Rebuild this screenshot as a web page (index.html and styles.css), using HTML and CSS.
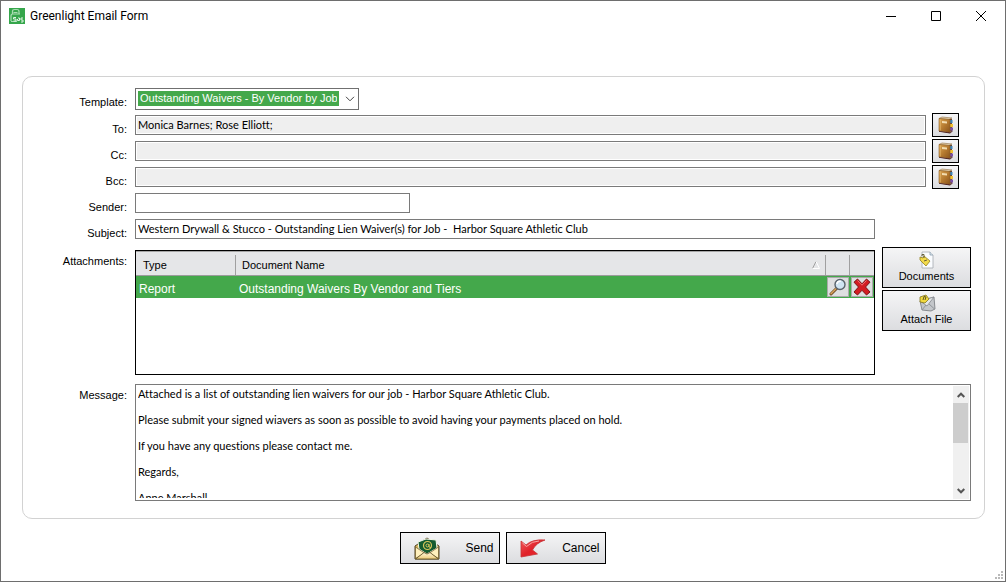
FILE: index.html
```html
<!DOCTYPE html>
<html lang="en">
<head>
<meta charset="utf-8">
<title>Greenlight Email Form</title>
<link rel="stylesheet" href="styles.css">
</head>
<body>
<svg class="defs" aria-hidden="true">
  <defs>
    <linearGradient id="leather" x1="0" y1="0" x2="1" y2="1">
      <stop offset="0" stop-color="#dda957"/><stop offset=".5" stop-color="#b67b30"/><stop offset="1" stop-color="#88531c"/>
    </linearGradient>
    <linearGradient id="red" x1="0" y1="0" x2="1" y2="1">
      <stop offset="0" stop-color="#f25a5c"/><stop offset=".5" stop-color="#e0222a"/><stop offset="1" stop-color="#f0262c"/>
    </linearGradient>
    <linearGradient id="paper" x1="0" y1="0" x2="0" y2="1">
      <stop offset="0" stop-color="#fff8df"/><stop offset="1" stop-color="#eccb78"/>
    </linearGradient>
    <symbol id="book" viewBox="0 0 16 18">
      <path d="M11 2.500l3 .5v12L10 17z" fill="#6b4630"/>
      <path d="M12 4h2.500v3H12z" fill="#3b83b8"/>
      <path d="M12 8h3v3H12z" fill="#f2c230"/>
      <path d="M12 11.500h3v3H12z" fill="#7a4fa8"/>
      <path d="M1 2.500L4 1l10 1-3 1.500z" fill="#e9d7b4" stroke="#7a5223" stroke-width=".5"/>
      <path d="M1 2.500l11 1v13L1 15z" fill="url(#leather)" stroke="#8a5a22" stroke-width=".6"/>
      <path d="M4 5l5 .5v2L4 7z" fill="#f3ddb0"/>
      <path d="M2.200 3.500v11" stroke="#e9bd72" stroke-width=".8"/>
      <path d="M1 15l11 1.500 2.500-2v1L12 17.500 1 15.800z" fill="#4b1d1d"/>
    </symbol>
  </defs>
</svg>
<div class="window">
  <header class="titlebar">
    <svg class="app-icon" viewBox="0 0 16 16" aria-hidden="true">
      <rect width="16" height="16" fill="#35a64b"/>
      <path d="M3.500 6V3.500Q3.500 1.500 5.500 1.500H8Q10 1.500 10 3.500V6" fill="none" stroke="#a9dcb2" stroke-width="1.200"/>
      <path d="M2 13V8Q2 6 4 6h7M2 13.500h6M4.500 4.500h4" fill="none" stroke="#a9dcb2" stroke-width="1.200"/>
      <path d="M7 9.500H4.500v1.500H7V13H4.500M9 10h1.500v2.500H8.500V11M14 10h-2v2h2v2h-2" fill="none" stroke="#dff4e2" stroke-width="1"/>
    </svg>
    <h1 class="title">Greenlight Email Form</h1>
    <div class="window-buttons">
      <button class="window-button" aria-label="Minimize"><svg viewBox="0 0 10 10"><path d="M0 5.500h10"/></svg></button>
      <button class="window-button" aria-label="Maximize"><svg viewBox="0 0 10 10"><path d="M.5.5h9v9h-9z"/></svg></button>
      <button class="window-button" aria-label="Close"><svg viewBox="0 0 10 10"><path d="M0 0l10 10M10 0L0 10"/></svg></button>
    </div>
  </header>

  <main class="panel">
    <div class="row row-template">
      <label class="label" for="template">Template:</label>
      <div class="combo">
        <select id="template" class="combo-select"><option>Outstanding Waivers - By Vendor by Job</option></select>
        <svg class="combo-arrow" viewBox="0 0 10 6" aria-hidden="true"><path d="M1 .8l4 4 4-4"/></svg>
      </div>
    </div>
    <div class="row row-address">
      <label class="label" for="to">To:</label>
      <input id="to" class="field field-grey" value="Monica Barnes; Rose Elliott;" readonly>
      <button class="button button-book" aria-label="Choose To"><svg class="book"><use href="#book"/></svg></button>
    </div>
    <div class="row row-address">
      <label class="label" for="cc">Cc:</label>
      <input id="cc" class="field field-grey" readonly>
      <button class="button button-book" aria-label="Choose Cc"><svg class="book"><use href="#book"/></svg></button>
    </div>
    <div class="row row-address">
      <label class="label" for="bcc">Bcc:</label>
      <input id="bcc" class="field field-grey" readonly>
      <button class="button button-book" aria-label="Choose Bcc"><svg class="book"><use href="#book"/></svg></button>
    </div>
    <div class="row">
      <label class="label" for="sender">Sender:</label>
      <input id="sender" class="field field-sender">
    </div>
    <div class="row row-subject">
      <label class="label" for="subject">Subject:</label>
      <input id="subject" class="field" value="Western Drywall &amp; Stucco - Outstanding Lien Waiver(s) for Job -  Harbor Square Athletic Club">
    </div>

    <div class="block block-attachments">
      <span class="label" id="attachments-label">Attachments:</span>
      <div class="grid-box">
        <table class="grid" aria-labelledby="attachments-label">
          <thead>
            <tr>
              <th class="col-type">Type</th>
              <th><span class="sortable">Document Name
                <svg class="sort" viewBox="0 0 8 8" aria-hidden="true"><path d="M.5 7.500L4 .5" stroke="#a0a0a0"/><path d="M4 .5l3.500 7h-7" stroke="#fff"/></svg></span></th>
              <th class="col-tool"></th>
              <th class="col-tool"></th>
            </tr>
          </thead>
          <tbody>
            <tr>
              <td>Report</td>
              <td>Outstanding Waivers By Vendor and Tiers</td>
              <td class="tool-cell"><button class="tool" aria-label="Preview">
                <svg viewBox="0 0 18 18"><path d="M2 16l6-6" stroke="#6d4b26" stroke-width="3" stroke-linecap="round"/><path d="M2 15.700l5.500-5.500" stroke="#d9a45c" stroke-width="1.500" stroke-linecap="round"/><circle cx="11" cy="6.500" r="5" fill="#cfe4f2" stroke="#59636c" stroke-width="1.400"/><path d="M7.800 6a3.500 3.500 0 0 1 4-2.700" fill="none" stroke="#fff" stroke-width="1.500"/></svg></button></td>
              <td class="tool-cell"><button class="tool" aria-label="Delete">
                <svg viewBox="0 0 18 18"><path d="M4.500 1L9 5.800 13.500 1 17 4.200 12.500 9 17 14l-3.500 3L9 12.300 4.500 17 1 14l4.500-5L1 4.200z" fill="#d31d22" stroke="#7d1114" stroke-width="1" stroke-linejoin="round"/><path d="M4.500 2.500L9 7.200l4.500-4.700" fill="none" stroke="#ef7072" stroke-width="1"/></svg></button></td>
            </tr>
          </tbody>
        </table>
      </div>
      <div class="side-buttons">
        <button class="button button-side">
          <svg class="side-icon" viewBox="0 0 18 18"><path d="M4 1h8l3 3v13H4z" fill="#fafcff" stroke="#a3a8ae" stroke-width=".8"/><path d="M12 1v3h3" fill="#dce6ee" stroke="#8aa0ae" stroke-width=".8"/><path d="M2 6l3 1 1-2 6 5-4 5-6-6z" fill="#f2da4b" stroke="#93801c" stroke-width=".8" stroke-linejoin="round"/><path d="M4 5V3.500h2V7M6 10l3-1" fill="none" stroke="#67603a"/></svg>
          Documents</button>
        <button class="button button-side">
          <svg class="side-icon" viewBox="0 0 18 18"><path d="M2 7l14-4 1 12-4 2-9-1z" fill="#c3c6ca" stroke="#73777c" stroke-width=".8" stroke-linejoin="round"/><path d="M2 7l7 5 7-9z" fill="#e4e6e8" stroke="#85898e" stroke-width=".8" stroke-linejoin="round"/><path d="M4 16l4-5M16.500 15L11 10" fill="none" stroke="#8b8f94" stroke-width=".9"/><path d="M2 3l6-2 3 4-4 4-5-1z" fill="#f1d93e" stroke="#83751d" stroke-width=".8" stroke-linejoin="round"/><path d="M5 6l1-3.500 2 .5-1 3" fill="none" stroke="#5d5626"/></svg>
          Attach File</button>
      </div>
    </div>

    <div class="block block-message">
      <label class="label" for="message">Message:</label>
      <div class="message-box">
        <textarea id="message" class="message">Attached is a list of outstanding lien waivers for our job - Harbor Square Athletic Club.

Please submit your signed wiavers as soon as possible to avoid having your payments placed on hold.

If you have any questions please contact me.

Regards,

Anne Marshall</textarea>
        <div class="scrollbar">
          <button class="scroll-arrow" aria-label="Scroll up"><svg viewBox="0 0 8 6"><path d="M.7 5L4 1.700 7.300 5"/></svg></button>
          <div class="scroll-thumb"></div>
          <button class="scroll-arrow scroll-down" aria-label="Scroll down"><svg viewBox="0 0 8 6"><path d="M.7 1L4 4.300 7.300 1"/></svg></button>
        </div>
      </div>
    </div>
  </main>

  <footer class="actions">
    <button class="button button-action">
      <svg class="action-icon" viewBox="0 0 26 24"><path d="M1 10L13 2l12 8v13H1z" fill="#d8b660" stroke="#4c4023"/><path d="M4 6l8-3 10 1 1 8-10 6-8-5z" fill="#155c30" stroke="#f5f8e9"/><circle cx="13.500" cy="9.500" r="4" fill="none" stroke="#d8c65b" stroke-width="1.200"/><circle cx="13.500" cy="9.500" r="1.500" fill="none" stroke="#d8c65b"/><path d="M15 8v3l2 .5" fill="none" stroke="#d8c65b"/><path d="M1.500 11l9 6L1.500 22.500zM24.500 11l-9 6 9 5.500z" fill="#fff0bd" stroke="#655326" stroke-width=".7"/><path d="M1.500 23L10 16.500l3 1.500 3-1.500 8.500 6.500z" fill="url(#paper)" stroke="#5c4b20" stroke-width=".8"/></svg>
      Send</button>
    <button class="button button-action">
      <svg class="action-icon" viewBox="0 0 26 24"><path d="M1 5l5 4Q12 3 25 4 16 7 12.500 14l5 4L1 21z" fill="url(#red)" stroke="#c63236" stroke-width=".8" stroke-linejoin="round"/><path d="M2.500 7l4 3.500Q12 5 19 5" fill="none" stroke="#f8a3a3"/></svg>
      Cancel</button>
  </footer>
  <svg class="grip" viewBox="0 0 8 8" aria-hidden="true"><path d="M6 0h2v2H6zM3 3h2v2H3zM6 3h2v2H6zM0 6h2v2H0zM3 6h2v2H3zM6 6h2v2H6z"/></svg>
</div>
</body>
</html>
```
FILE: styles.css
```css
* { box-sizing: border-box; }
body {
  margin: 0;
  font: 11px/14px "Liberation Sans", Arial, sans-serif;
  color: #000;
  background: #fff;
}
button, input, select, textarea { font: inherit; color: inherit; margin: 0; }
svg { display: block; }
.defs { position: absolute; width: 0; height: 0; }

.window {
  position: relative;
  display: flex;
  flex-direction: column;
  min-height: 100vh;
  padding: 0 20px 17px 21px;
  border: 1px solid #6e6e6e;
}

.titlebar {
  display: flex;
  align-items: center;
  height: 29px;
  margin: 0 -18px 46px -13px;
  gap: 5px;
}
.app-icon { width: 16px; height: 16px; }
.title { margin: 0; font: 12px/16px Roboto, sans-serif; }
.window-buttons { display: flex; margin-left: auto; }
.window-button {
  display: flex;
  align-items: center;
  justify-content: center;
  width: 45px;
  height: 28px;
  padding: 0;
  border: 0;
  background: none;
}
.window-button svg { width: 10px; height: 10px; fill: none; stroke: #000; overflow: visible; }

.panel {
  padding: 9px 13px 17px 0;
  border: 1px solid #d2d2d2;
  border-radius: 10px;
}
.row { display: flex; align-items: center; height: 26px; }
.row-address { padding-right: 12px; }
.row-subject { padding-right: 96px; }
.label { flex: none; width: 104px; margin-right: 8px; text-align: right; }
.row .label { padding-top: 8px; }
.row-template .label { padding-top: 6px; }

.combo {
  display: flex;
  align-items: center;
  width: 224px;
  height: 22px;
  padding: 1px 2px 2px;
  border: 1px solid #707070;
}
.combo-select {
  width: 201px;
  height: 15px;
  padding: 0 2px 1px;
  border: 0;
  border-radius: 0;
  appearance: none;
  background: #44a84b;
  color: #fff;
}
.combo-arrow { width: 10px; height: 6px; margin-left: 6px; fill: none; stroke: #444; }

.field {
  flex: 1;
  min-width: 0;
  height: 20px;
  padding: 0 2px 2px;
  border: 1px solid #7a7a7a;
  background: #fff;
  white-space: pre;
  font-family: Lato, sans-serif;
  font-variant-ligatures: none;
}
.field-grey { background: #efefef; box-shadow: inset 0 0 0 1px #fff; }
.field-sender { flex: none; width: 275px; }

.button {
  border: 1px solid #000;
  border-radius: 0;
  background: linear-gradient(#f5f5f6, #dcdde0);
}
.button-book {
  display: flex;
  align-items: center;
  justify-content: center;
  width: 27px;
  height: 24px;
  margin-left: 6px;
  padding: 0;
}
.book { width: 16px; height: 18px; }

.block { display: flex; }
.block-attachments { margin-top: 5px; }
.block-attachments .label { padding-top: 7px; }
.grid-box {
  flex: 1;
  height: 125px;
  margin-top: 3px;
  border: 1px solid #000;
}
.grid { width: 100%; border-collapse: collapse; table-layout: fixed; }
.grid th {
  height: 24px;
  padding: 3px 6px 0;
  border-top: 1px solid #a5a5a5;
  border-bottom: 1px solid #9b9b9b;
  background: linear-gradient(#a0a0a0, #a0a0a0) right 3px / 1px 20px no-repeat #e5e6e8;
  font-weight: normal;
  text-align: left;
}
.grid th:last-child { background-image: none; }
.grid .col-type { width: 100px; padding-left: 7px; }
.grid .col-tool { width: 24px; }
.sortable { display: flex; justify-content: space-between; align-items: center; }
.sort { width: 8px; height: 8px; fill: none; }
.grid td {
  height: 22px;
  padding: 4px 3px 0;
  background: #44a84b;
  color: #fff;
  font-size: 12px;
}
.grid .tool-cell { padding: 1px; }
.tool {
  display: flex;
  align-items: center;
  justify-content: center;
  width: 22px;
  height: 20px;
  padding: 0;
  border: 1px solid #aaa;
  background: #dedfe0;
}
.tool svg { width: 18px; height: 18px; }

.side-buttons { display: flex; flex-direction: column; gap: 2px; margin-left: 7px; }
.button-side {
  display: flex;
  flex-direction: column;
  align-items: center;
  width: 89px;
  height: 41px;
  padding: 3px 0 0;
}
.side-icon { width: 18px; height: 18px; }

.block-message { margin-top: 9px; }
.block-message .label { padding-top: 4px; }
.message-box {
  flex: 1;
  display: flex;
  height: 117px;
  padding: 1px 1px 1px 2px;
  border: 1px solid #7a7a7a;
}
.message {
  flex: 1;
  height: 112px;
  padding: 1px 0 0;
  border: 0;
  outline: 0;
  resize: none;
  overflow: hidden;
  line-height: 13px;
  font-family: Lato, sans-serif;
  font-variant-ligatures: none;
}
.scrollbar { display: flex; flex-direction: column; width: 16px; background: #f0f0f0; }
.scroll-arrow {
  display: flex;
  align-items: center;
  justify-content: center;
  height: 17px;
  padding: 0;
  border: 0;
  background: none;
}
.scroll-arrow svg { width: 8px; height: 6px; fill: none; stroke: #555; stroke-width: 2; }
.scroll-down { margin-top: auto; }
.scroll-thumb { width: 15px; height: 40px; background: #cdcdcd; }

.actions { display: flex; justify-content: center; gap: 6px; margin-top: 13px; padding-right: 2px; }
.button-action {
  display: flex;
  align-items: center;
  justify-content: space-between;
  width: 100px;
  height: 32px;
  padding: 0 5px 0 13px;
  font-size: 12px;
}
.action-icon { width: 26px; height: 24px; }

.grip { position: absolute; right: 2px; bottom: 2px; width: 8px; height: 8px; fill: #b9b9b9; }
```
